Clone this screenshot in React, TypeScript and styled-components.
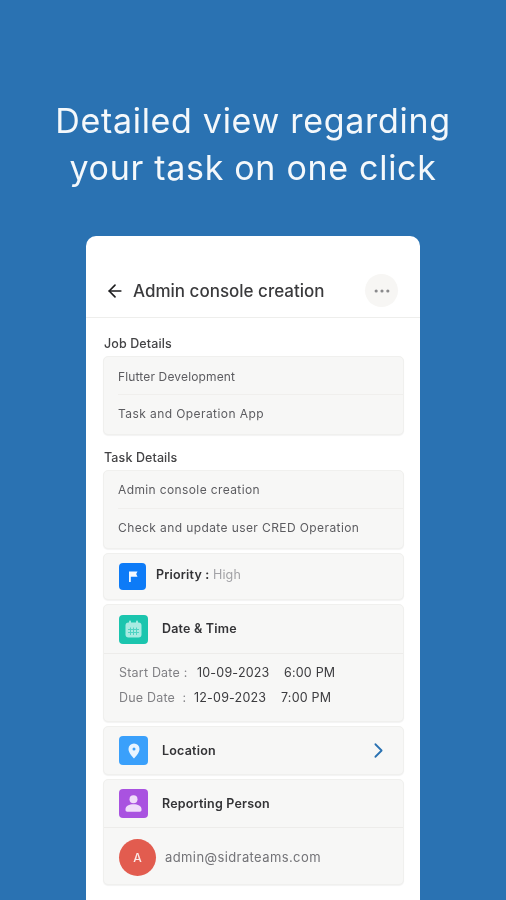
import React from "react";
import styled, { createGlobalStyle } from "styled-components";
import { ArrowLeft, ChevronRight, Ellipsis } from "lucide-react";

const Global = createGlobalStyle`
  html, body { margin: 0; padding: 0; height: 900px; overflow: hidden; background: #2a72b2; }
  * { box-sizing: border-box; }
`;

const Page = styled.main`
  width: 506px;
  height: 900px;
  overflow: hidden;
  background: #2a72b2;
  font-family: Inter, "Liberation Sans", sans-serif;
  display: flex;
  flex-direction: column;
  align-items: center;
  padding-top: 97px;
  filter: blur(0.35px);
`;

const Headline = styled.h1`
  margin: 0 0 45px;
  font-size: 34px;
  line-height: 47px;
  font-weight: 400;
  letter-spacing: 0.7px;
  color: #f4f8fb;
  text-align: center;
`;

const Card = styled.section`
  width: 334px;
  flex: 1;
  background: #fff;
  border-radius: 10px 10px 0 0;
`;

const Header = styled.header`
  height: 82px;
  padding: 38px 22px 0 19px;
  display: flex;
  align-items: flex-start;
  border-bottom: 1px solid #eeeeec;
`;

const BackIcon = styled(ArrowLeft)`
  width: 20px;
  height: 20px;
  margin-top: 7px;
  color: #1d1d1f;
`;

const Title = styled.h2`
  margin: 7px 0 0 8px;
  flex: 1;
  font-size: 17px;
  line-height: 20px;
  font-weight: 500;
  color: #3a3a3c;
`;

const MoreButton = styled.div`
  width: 33px;
  height: 33px;
  border-radius: 50%;
  background: #f7f6f4;
  color: #8a8a8c;
  display: flex;
  align-items: center;
  justify-content: center;
`;

const Body = styled.div`
  padding: 18px 16px 0 17px;
  display: flex;
  flex-direction: column;
`;

const SectionLabel = styled.h3<{ $top?: number }>`
  margin: ${(p) => p.$top ?? 0}px 0 4px 1px;
  font-size: 12.5px;
  line-height: 16px;
  font-weight: 500;
  letter-spacing: 0.1px;
  color: #434345;
`;

const Box = styled.div`
  background: #f7f7f6;
  border: 1px solid #f0f0ee;
  border-radius: 5px;
  box-shadow: 0 1px 1px rgba(0, 0, 0, 0.05);
  margin-bottom: 4px;
`;

const PlainRow = styled.div<{ $height: number; $divided?: boolean; $tracking: number; $nudge?: number }>`
  height: ${(p) => p.$height}px;
  margin-left: 14px;
  padding-top: ${(p) => Math.max(p.$nudge ?? 0, 0)}px;
  padding-bottom: ${(p) => Math.max(-(p.$nudge ?? 0), 0)}px;
  display: flex;
  align-items: center;
  font-size: 12px;
  letter-spacing: ${(p) => p.$tracking}px;
  color: #5c5c60;
  border-bottom: ${(p) => (p.$divided ? "1px solid #f0efed" : "none")};
`;

const IconRow = styled.div<{ $height: number; $divided?: boolean }>`
  height: ${(p) => p.$height}px;
  padding: 0 12px 0 15px;
  display: flex;
  align-items: center;
  border-bottom: ${(p) => (p.$divided ? "1px solid #edecea" : "none")};
`;

const IconTile = styled.div<{ $color: string; $size: number }>`
  width: ${(p) => p.$size}px;
  height: ${(p) => p.$size}px;
  border-radius: 4px;
  background: ${(p) => p.$color};
  flex: none;
  display: flex;
  align-items: center;
  justify-content: center;
`;

const RowTitle = styled.span<{ $gap: number; $lift?: number }>`
  margin-left: ${(p) => p.$gap}px;
  margin-bottom: ${(p) => p.$lift ?? 0}px;
  flex: 1;
  font-size: 12.5px;
  font-weight: 600;
  letter-spacing: 0.2px;
  color: #333336;
`;

const Muted = styled.span`
  font-weight: 400;
  color: #a2a2a6;
`;

const DateBlock = styled.div`
  padding: 6px 0 11px 15px;
  display: flex;
  flex-direction: column;
`;

const DateRow = styled.div`
  height: 25px;
  display: flex;
  align-items: center;
  font-size: 12.5px;
  letter-spacing: 0.2px;
  color: #3c3c3f;
`;

const DateLabel = styled.span<{ $width: number }>`
  width: ${(p) => p.$width}px;
  color: #808084;
`;

const DateValue = styled.span<{ $width: number }>`
  width: ${(p) => p.$width}px;
`;

const Person = styled.div`
  height: 56px;
  padding: 2px 0 0 15px;
  display: flex;
  align-items: center;
`;

const Avatar = styled.div`
  width: 37px;
  height: 37px;
  border-radius: 50%;
  background: #e25c4f;
  color: #fbe9e7;
  font-size: 12px;
  font-weight: 500;
  display: flex;
  align-items: center;
  justify-content: center;
`;

const Email = styled.span`
  margin-left: 9px;
  font-size: 13px;
  letter-spacing: 0.4px;
  color: #737377;
`;

const Chevron = styled(ChevronRight)`
  width: 25px;
  height: 25px;
  color: #2a72b2;
`;

const FlagIcon = () => (
  <svg width="12" height="13" viewBox="0 0 12 13" fill="#f2f8ff">
    <path d="M2 1.500h8.500l-1.300 2.500 1.300 2.800H3.800V12H2z" />
  </svg>
);

const CalendarIcon = () => (
  <svg width="17" height="18" viewBox="0 0 17 18">
    <rect x="0.500" y="2.500" width="16" height="15" rx="3" fill="#a8ebe2" />
    <rect x="4" y="0.500" width="2" height="4" rx="1" fill="#a8ebe2" />
    <rect x="11" y="0.500" width="2" height="4" rx="1" fill="#a8ebe2" />
    <path d="M3 9.500h11M3 12.500h11M5.500 7.500v7.500M8.500 7.500v7.500M11.500 7.500v7.500" stroke="#4fd3c3" strokeWidth="1" />
  </svg>
);

const PinIcon = () => (
  <svg width="12" height="16" viewBox="0 0 12 16">
    <path
      fillRule="evenodd"
      fill="#e8f4ff"
      d="M6 .5a5.500 5.500 0 0 1 5.500 5.500c0 3.600-3.900 7.900-5.500 9.500C4.400 13.900.5 9.600.5 6A5.500 5.500 0 0 1 6 .5zm0 4a1.500 1.500 0 1 0 0 3 1.500 1.500 0 0 0 0-3z"
    />
  </svg>
);

const PersonIcon = () => (
  <svg width="17" height="17" viewBox="0 0 17 17" fill="#f0dcfa">
    <circle cx="8.500" cy="4.300" r="4" />
    <path d="M.5 14c0-3 3.600-4.700 8-4.700s8 1.700 8 4.700v1c0 1-.7 1.700-1.700 1.700H2.200C1.200 16.700.5 16 .5 15z" />
  </svg>
);

export default function App() {
  return (
    <Page>
      <Global />
      <Headline>
        Detailed view regarding
        <br />
        your task on one click
      </Headline>
      <Card>
        <Header>
          <BackIcon strokeWidth={2} />
          <Title>Admin console creation</Title>
          <MoreButton>
            <Ellipsis size={20} strokeWidth={1.8} />
          </MoreButton>
        </Header>
        <Body>
          <SectionLabel>Job Details</SectionLabel>
          <Box>
            <PlainRow $height={38} $divided $tracking={0.15} $nudge={2}>Flutter Development</PlainRow>
            <PlainRow $height={39} $tracking={0.42} $nudge={-2}>Task and Operation App</PlainRow>
          </Box>
          <SectionLabel $top={11}>Task Details</SectionLabel>
          <Box>
            <PlainRow $height={38} $divided $tracking={0.38}>Admin console creation</PlainRow>
            <PlainRow $height={39} $tracking={0.4} $nudge={-2}>Check and update user CRED Operation</PlainRow>
          </Box>
          <Box>
            <IconRow $height={45}>
              <IconTile $color="#0d7bf7" $size={27}><FlagIcon /></IconTile>
              <RowTitle $gap={10} $lift={4}>Priority : <Muted>High</Muted></RowTitle>
            </IconRow>
          </Box>
          <Box>
            <IconRow $height={49} $divided>
              <IconTile $color="#1bc5ae" $size={29}><CalendarIcon /></IconTile>
              <RowTitle $gap={14} $lift={1}>Date &amp; Time</RowTitle>
            </IconRow>
            <DateBlock>
              <DateRow>
                <DateLabel $width={78}>Start Date :</DateLabel>
                <DateValue $width={87}>10-09-2023</DateValue>
                <span>6:00 PM</span>
              </DateRow>
              <DateRow>
                <DateLabel $width={75}>Due Date&nbsp;&nbsp;:</DateLabel>
                <DateValue $width={87}>12-09-2023</DateValue>
                <span>7:00 PM</span>
              </DateRow>
            </DateBlock>
          </Box>
          <Box>
            <IconRow $height={47}>
              <IconTile $color="#3aa0fb" $size={29}><PinIcon /></IconTile>
              <RowTitle $gap={14}>Location</RowTitle>
              <Chevron strokeWidth={1.7} />
            </IconRow>
          </Box>
          <Box>
            <IconRow $height={48} $divided>
              <IconTile $color="#a952e0" $size={29}><PersonIcon /></IconTile>
              <RowTitle $gap={14}>Reporting Person</RowTitle>
            </IconRow>
            <Person>
              <Avatar>A</Avatar>
              <Email>admin@sidrateams.com</Email>
            </Person>
          </Box>
        </Body>
      </Card>
    </Page>
  );
}
